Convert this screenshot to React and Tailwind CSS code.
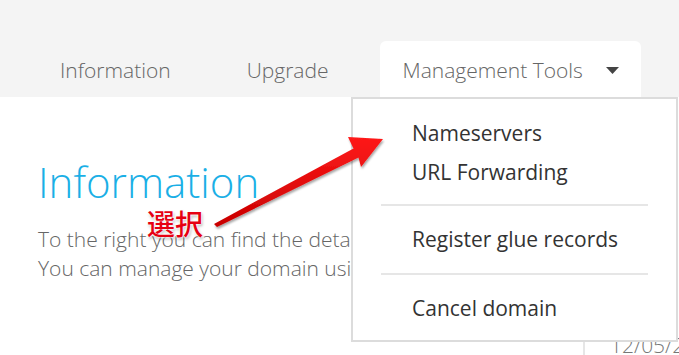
import React from 'react';

const font = { fontFamily: '"Open Sans", "Liberation Sans", sans-serif' };

function Tab({ label, active, caret, className = '' }) {
  return (
    <div
      className={
        'flex items-center h-[56px] pt-[3px] text-[21px] font-light text-[#666] whitespace-nowrap ' +
        (active ? 'bg-white rounded-t-[6px] ' : '') +
        className
      }
    >
      <span>{label}</span>
      {caret && (
        <svg width="13" height="7" viewBox="0 0 13 7" className="ml-[23px]">
          <polygon points="0,0 13,0 6.5,7" fill="#444" />
        </svg>
      )}
    </div>
  );
}

function Menu() {
  const item = 'px-[59px] text-[21px] text-[#333] leading-[39px] whitespace-nowrap';
  return (
    <div className="absolute left-[351px] top-[97px] w-[327px] h-[245px] bg-white border-2 border-[#dcdcdc] pt-[15px]">
      <div className={item}>Nameservers</div>
      <div className={item}>URL Forwarding</div>
      <div className="mx-[28px] mt-[12px] mb-[14px] border-t-2 border-[#e6e6e6]" />
      <div className={item}>Register glue records</div>
      <div className="mx-[28px] my-[14px] border-t-2 border-[#e6e6e6]" />
      <div className={item}>Cancel domain</div>
    </div>
  );
}

function Annotation() {
  return (
    <div className="absolute inset-0 pointer-events-none">
      <svg width="679" height="355" className="absolute left-0 top-0">
        <defs>
          <linearGradient id="red" x1="0" y1="0" x2="0" y2="1">
            <stop offset="0" stopColor="#ff1a1a" />
            <stop offset="1" stopColor="#c80000" />
          </linearGradient>
          <filter id="sh" x="-10%" y="-10%" width="120%" height="130%">
            <feDropShadow dx="1" dy="2" stdDeviation="1.2" floodColor="#000" floodOpacity="0.35" />
          </filter>
        </defs>
        <polygon
          points="214,224 353.5,148.5 348,137 383,139 361,167 358.5,157.5 217,227"
          fill="url(#red)"
          filter="url(#sh)"
        />
      </svg>
      <span
        className="absolute left-[147px] top-[209px] text-[28px] font-medium text-[#e60012] leading-none [text-shadow:0_0_2px_#fff,0_0_2px_#fff,0_0_3px_#fff,1px_2px_3px_rgba(0,0,0,0.35)]"
        style={{ fontFamily: '"Noto Sans CJK JP", sans-serif' }}
      >
        選択
      </span>
    </div>
  );
}

export default function App() {
  return (
    <div className="relative w-[679px] h-[355px] overflow-hidden bg-white" style={font}>
      <div className="h-[97px] bg-[#f4f4f4] flex items-end">
        <Tab label="Information" className="ml-[60px]" />
        <Tab label="Upgrade" className="ml-[76px]" />
        <Tab label="Management Tools" active caret className="ml-[51px] pl-[23px] w-[261px]" />
      </div>
      <div className="flex">
        <div className="w-[583px] shrink-0 pl-[38px] pt-[57px]">
          <h1 className="text-[42px] font-light text-[#1aafe6] leading-[56px]">Information</h1>
          <p className="mt-[15px] text-[21px] font-light text-[#666] leading-[29px] whitespace-nowrap">
            To the right you can find the details of your domain.
            <br />
            You can manage your domain using the tabs above.
          </p>
        </div>
        <div className="flex-1 border-l-2 border-[#e6e6e6] pt-[234px] pl-[25px] text-[21px] font-light text-[#777] leading-[28px] whitespace-nowrap">
          12/05/2019
        </div>
      </div>
      <Menu />
      <Annotation />
    </div>
  );
}
